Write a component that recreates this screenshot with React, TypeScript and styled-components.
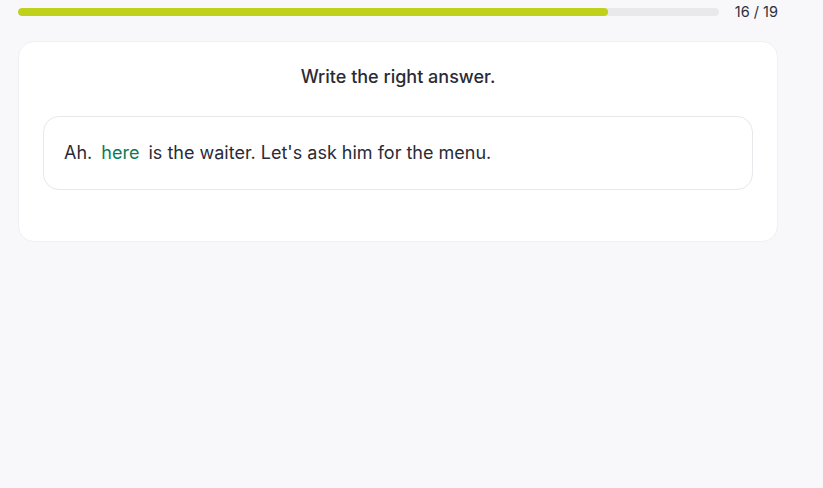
import styled, { createGlobalStyle } from "styled-components";

const GlobalStyle = createGlobalStyle`
  html, body {
    margin: 0;
    padding: 0;
    background: #f8f8fa;
    font-family: Inter, "Noto Sans", sans-serif;
    color: #2b2b36;
  }
`;

const current = 16;
const total = 19;

const App = () => {
  return (
    <Page>
      <GlobalStyle />
      <Container>
        <ProgressRow>
          <Track>
            <Fill style={{ width: `${(current / total) * 100}%` }} />
          </Track>
          <Counter>
            {current} / {total}
          </Counter>
        </ProgressRow>
        <Card>
          <Title>Write the right answer.</Title>
          <Sentence>
            Ah. <Answer>here</Answer> is the waiter. Let's ask him for the menu.
          </Sentence>
        </Card>
      </Container>
    </Page>
  );
};

const Page = styled.div`
  min-height: 488px;
  padding: 7px 18px 0 18px;
  box-sizing: border-box;
`;

const Container = styled.div`
  width: 760px;
  display: flex;
  flex-direction: column;
  gap: 24px;
`;

const ProgressRow = styled.div`
  display: flex;
  align-items: center;
  gap: 16px;
  height: 10px;
`;

const Track = styled.div`
  flex: 1;
  height: 8px;
  border-radius: 4px;
  background: #e9e9ec;
  overflow: hidden;
`;

const Fill = styled.div`
  height: 100%;
  border-radius: 4px;
  background: #bfd11b;
`;

const Counter = styled.span`
  font-size: 14.5px;
  color: #2f2f3a;
  white-space: nowrap;
  margin-top: -1px;
`;

const Card = styled.div`
  background: #ffffff;
  border: 1px solid #f0f0f3;
  border-radius: 16px;
  padding: 24px 24px 51px 24px;
  display: flex;
  flex-direction: column;
  gap: 29px;
`;

const Title = styled.h2`
  margin: 0;
  font-size: 18px;
  font-weight: 500;
  line-height: 21px;
  text-align: center;
  color: #2b2b36;
`;

const Sentence = styled.p`
  margin: 0;
  border: 1px solid #e8e8ec;
  border-radius: 16px;
  padding: 23px 20px 24px 20px;
  font-size: 18px;
  line-height: 25px;
  color: #2b2b36;
`;

const Answer = styled.span`
  color: #0b7b58;
  font-weight: 400;
  padding: 0 4px;
`;

export default App;
